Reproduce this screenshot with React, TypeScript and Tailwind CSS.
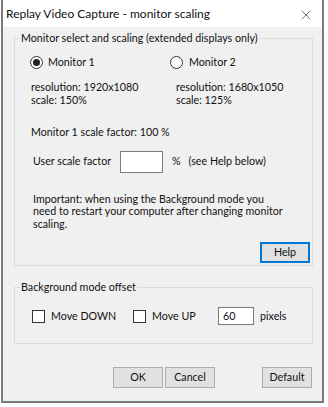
import { X } from "lucide-react";

function Radio({ checked }: { checked?: boolean }) {
  return (
    <span className="w-[13px] h-[13px] rounded-full border border-[#333] bg-white flex items-center justify-center shrink-0">
      {checked && <span className="w-[7px] h-[7px] rounded-full bg-[#222]" />}
    </span>
  );
}

function Check() {
  return <span className="w-[13px] h-[13px] border border-[#333] bg-white shrink-0" />;
}

function Btn({ label, w, focus }: { label: string; w: string; focus?: boolean }) {
  return (
    <button
      className={`${w} h-[21px] flex items-center justify-center bg-[#e1e1e1] ${focus ? "border-2 border-[#0078d7]" : "border border-[#adadad]"}`}
    >
      {label}
    </button>
  );
}

export default function App() {
  return (
    <div className="w-[328px] h-[407px] bg-white text-[#111] text-[10.7px] leading-[12.5px] whitespace-nowrap font-['Lato','Noto_Sans',sans-serif]">
      <div className="ml-[1px] w-[323px] h-[403px] border-2 border-t-0 border-[#7a7a7a] flex flex-col">
        <div className="h-[27px] bg-white flex items-center justify-between pl-[3px] pr-[8px]">
          <span className="text-[12px] pt-[2px]">Replay Video Capture - monitor scaling</span>
          <X size={16} strokeWidth={1} className="text-[#333] mt-[2px]" />
        </div>

        <div className="flex-1 bg-[#f0f0f0] pl-[11px] pr-[9px] pt-[4px]">
          <fieldset className="border border-[#dcdcdc] h-[235px] min-w-0">
            <legend className="ml-[5px] px-[1px] leading-[14px]">Monitor select and scaling (extended displays only)</legend>

            <div className="pl-[15px]">
              <div className="flex items-center mt-[10px] h-[14px]">
                <div className="w-[140px] flex items-center gap-[5px]">
                  <Radio checked />
                  <span>Monitor 1</span>
                </div>
                <div className="flex items-center gap-[6px]">
                  <Radio />
                  <span>Monitor 2</span>
                </div>
              </div>

              <div className="flex mt-[12px] pl-[1px]">
                <div className="w-[145px]">
                  <div>resolution: 1920x1080</div>
                  <div>scale: 150%</div>
                </div>
                <div>
                  <div>resolution: 1680x1050</div>
                  <div>scale: 125%</div>
                </div>
              </div>

              <div className="mt-[20px] pl-[1px]">Monitor 1 scale factor: 100 %</div>

              <div className="flex items-center mt-[12px] pl-[3px]">
                <span className="w-[87px]">User scale factor</span>
                <span className="w-[43px] h-[22px] bg-white border border-[#7a7a7a]" />
                <span className="ml-[9px]">%</span>
                <span className="ml-[8px]">(see Help below)</span>
              </div>

              <div className="mt-[20px] pl-[3px]">
                Important: when using the Background mode you<br />
                need to restart your computer after changing monitor<br />
                scaling.
              </div>

              <div className="flex justify-end mt-[12px] pr-[2px]">
                <Btn label="Help" w="w-[50px]" focus />
              </div>
            </div>
          </fieldset>

          <fieldset className="mt-[14px] border border-[#dcdcdc] h-[64px] min-w-0">
            <legend className="ml-[5px] px-[1px] leading-[14px]">Background mode offset</legend>
            <div className="flex items-center mt-[13px] pl-[17px]">
              <Check />
              <span className="ml-[6px] w-[82px]">Move DOWN</span>
              <Check />
              <span className="ml-[6px] w-[66px]">Move UP</span>
              <span className="w-[36px] h-[18px] bg-white border border-[#7a7a7a] pl-[4px] flex items-center">60</span>
              <span className="ml-[6px]">pixels</span>
            </div>
          </fieldset>

          <div className="flex mt-[23px] pl-[99px]">
            <Btn label="OK" w="w-[50px]" />
            <div className="ml-[2px]"><Btn label="Cancel" w="w-[50px]" /></div>
            <div className="ml-[47px]"><Btn label="Default" w="w-[50px]" /></div>
          </div>
        </div>
      </div>
    </div>
  );
}
